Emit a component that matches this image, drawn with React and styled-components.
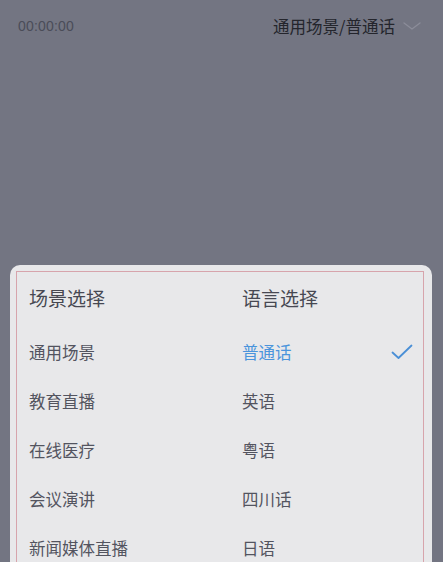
import React from "react";
import styled, { createGlobalStyle } from "styled-components";

const GlobalStyle = createGlobalStyle`
  html, body {
    margin: 0;
    padding: 0;
    background: #737582;
    font-family: "Noto Sans CJK SC", "Noto Sans", sans-serif;
  }
`;

const Page = styled.div`
  height: 562px;
  overflow: hidden;
  display: flex;
  flex-direction: column;
`;

const TopBar = styled.header`
  flex-shrink: 0;
  height: 52px;
  display: flex;
  align-items: center;
  justify-content: space-between;
  padding: 0 22px 0 18px;
`;

const Timer = styled.span`
  font-family: "Liberation Sans", Arial, sans-serif;
  font-size: 14px;
  color: #4a4c58;
  letter-spacing: 0.2px;
`;

const ModeButton = styled.div`
  display: flex;
  align-items: center;
  gap: 8px;
  font-size: 16.5px;
  color: #24252c;
`;

const Sheet = styled.section`
  flex-shrink: 0;
  margin: 213px 11px 0 10px;
  height: 320px;
  background: #e8e8ea;
  border-radius: 10px 10px 0 0;
  padding: 6px 8px 0 6px;
  display: flex;
`;

const Frame = styled.div`
  flex: 1;
  border: 1px solid #d7a4ac;
  border-bottom: none;
  padding: 0 0 0 12px;
`;

const Grid = styled.div`
  display: grid;
  grid-template-columns: 213px 1fr;
`;

const HeadCell = styled.div`
  height: 50px;
  margin-bottom: 5px;
  display: flex;
  align-items: center;
  font-size: 19px;
  color: #474852;
`;

const Cell = styled.div`
  height: 49px;
  display: flex;
  align-items: center;
  justify-content: space-between;
  padding-right: ${({ $right }) => ($right ? "10px" : "0")};
  font-size: 16.5px;
  color: ${({ $active }) => ($active ? "#4a94dc" : "#53545f")};
`;

const Check = () => (
  <svg width="22" height="16" viewBox="0 0 22 16" fill="none">
    <path d="M1.5 8.5 L7.5 14 L20.5 1.5" stroke="#4a8fd6" strokeWidth="1.8" strokeLinecap="round" strokeLinejoin="round" />
  </svg>
);

const Chevron = () => (
  <svg width="18" height="10" viewBox="0 0 18 10" fill="none">
    <path d="M1 2 L9 8 L17 2" stroke="#8b8d99" strokeWidth="1.3" strokeLinecap="round" strokeLinejoin="round" />
  </svg>
);

const scenes = ["通用场景", "教育直播", "在线医疗", "会议演讲", "新闻媒体直播"];
const languages = ["普通话", "英语", "粤语", "四川话", "日语"];

export default function App() {
  const selected = 0;
  return (
    <Page>
      <GlobalStyle />
      <TopBar>
        <Timer>00:00:00</Timer>
        <ModeButton>
          通用场景/普通话
          <Chevron />
        </ModeButton>
      </TopBar>
      <Sheet>
        <Frame>
          <Grid>
            <HeadCell>场景选择</HeadCell>
            <HeadCell>语言选择</HeadCell>
            {scenes.map((scene, i) => (
              <React.Fragment key={scene}>
                <Cell>{scene}</Cell>
                <Cell $right $active={i === selected}>
                  {languages[i]}
                  {i === selected && <Check />}
                </Cell>
              </React.Fragment>
            ))}
          </Grid>
        </Frame>
      </Sheet>
    </Page>
  );
}
